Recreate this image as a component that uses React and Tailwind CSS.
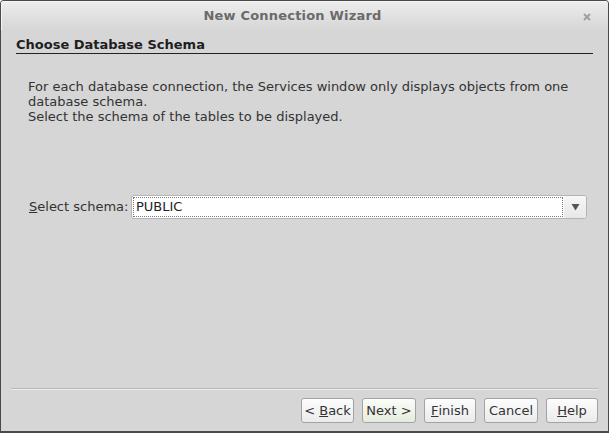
import React from "react";

function WizButton({ children, accent, w }) {
  return (
    <button
      className={
        "h-[25px] rounded-[3px] border border-[#a3a3a3] text-[13px] text-[#333] leading-none shadow-[inset_0_1px_0_#fff] flex items-center justify-center " +
        w +
        " " +
        (accent
          ? "bg-gradient-to-b from-[#fbfdf8] to-[#e6ecdc]"
          : "bg-gradient-to-b from-[#fdfdfd] to-[#ebebeb]")
      }
    >
      {children}
    </button>
  );
}

export default function App() {
  return (
    <div
      className="w-[609px] h-[433px] flex flex-col bg-[#d6d6d6] border border-[#4a4a4a] border-b-2 rounded-t-[4px] overflow-hidden"
      style={{ fontFamily: '"DejaVu Sans", sans-serif' }}
    >
      <div className="relative h-[29px] flex items-center justify-center pr-[24px] bg-gradient-to-b from-[#ededed] to-[#d6d6d6] shadow-[inset_1px_1px_0_#f6f6f6]">
        <span className="text-[13px] font-bold text-[#6a6a6a] tracking-[0.2px]">New Connection Wizard</span>
        <svg className="absolute right-[17px] top-[12px]" width="8" height="8" viewBox="0 0 8 8">
          <path d="M1 1L7 7M7 1L1 7" stroke="#a0a0a0" strokeWidth="2" />
        </svg>
      </div>

      <div className="mx-[15px] mt-[7px] border-b border-[#222] leading-[16px] text-[13px] font-bold text-[#1e1e1e]">
        Choose Database Schema
      </div>

      <div className="px-[27px] pt-[25px] text-[13px] leading-[15px] text-[#333]">
        <p>For each database connection, the Services window only displays objects from one</p>
        <p>database schema.</p>
        <p>Select the schema of the tables to be displayed.</p>
      </div>

      <div className="flex items-center pl-[28px] pr-[21px] mt-[71px] text-[13px] text-[#333]">
        <span className="w-[102px]">
          <span className="underline">S</span>elect schema:
        </span>
        <div className="flex-1 h-[24px] flex rounded-[3px] border border-[#b4b4b4] bg-white">
          <div className="flex-1 flex items-center m-[1px] border border-dotted border-[#7a7a7a] pl-[2px] text-[#222]">
            PUBLIC
          </div>
          <div className="w-[22px] flex items-center justify-center bg-gradient-to-b from-[#f7f7f7] to-[#e8e8e8] rounded-r-[3px]">
            <svg width="9" height="8" viewBox="0 0 9 8">
              <path d="M0.5 1H8.5L4.5 7.5Z" fill="#555" />
            </svg>
          </div>
        </div>
      </div>

      <div className="flex-1" />

      <div className="mx-[10px] h-[2px] border-t border-[#b9b9b9] border-b border-b-[#ececec]" />

      <div className="flex justify-end gap-[8px] pr-[10px] pt-[8px] pb-[8px]">
        <WizButton w="w-[53px]">
          &lt;&nbsp;<span className="underline">B</span>ack
        </WizButton>
        <WizButton accent w="w-[54px]">Next &gt;</WizButton>
        <WizButton w="w-[52px]">
          <span className="underline">F</span>inish
        </WizButton>
        <WizButton w="w-[54px]">Cancel</WizButton>
        <WizButton w="w-[52px]">
          <span className="underline">H</span>elp
        </WizButton>
      </div>
    </div>
  );
}
